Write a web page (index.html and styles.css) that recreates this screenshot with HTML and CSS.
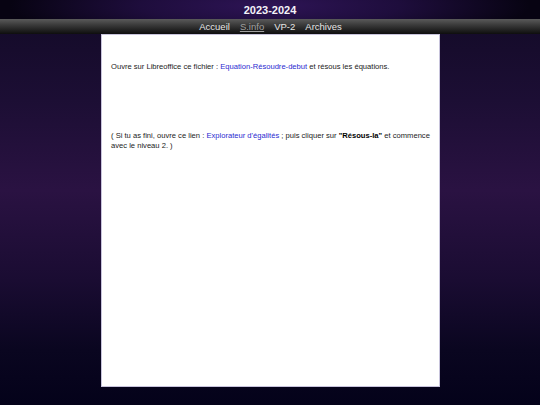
FILE: index.html
```html
<!DOCTYPE html>
<html lang="fr">
<head>
<meta charset="utf-8">
<title>2023-2024</title>
<link rel="stylesheet" href="styles.css">
</head>
<body>
<header class="top">
  <h1 class="title">2023-2024</h1>
</header>
<nav class="menu">
  <a class="menu-item" href="#">Accueil</a>
  <a class="menu-item current" href="#">S.info</a>
  <a class="menu-item" href="#">VP-2</a>
  <a class="menu-item" href="#">Archives</a>
</nav>
<main class="page">
  <section class="content">
    <p class="para first">Ouvre sur Libreoffice ce fichier : <a class="link" href="#">Equation-Résoudre-debut</a> et résous les équations.</p>
    <p class="para second">( Si tu as fini, ouvre ce lien : <a class="link" href="#">Explorateur d'égalités</a> ; puis cliquer sur <strong>"Résous-la"</strong> et commence avec le niveau 2. )</p>
  </section>
</main>
</body>
</html>
```
FILE: styles.css
```css
html, body {
  margin: 0;
  padding: 0;
}
body {
  width: 540px;
  height: 405px;
  overflow: hidden;
  font-family: "Liberation Sans", Arial, sans-serif;
  background: linear-gradient(to bottom, #120a26 0px, #1c0e34 100px, #2a1242 190px, #1a0c32 280px, #0a0620 350px, #04021a 405px);
  display: flex;
  flex-direction: column;
}
.top {
  height: 19px;
  background: radial-gradient(ellipse 260px 40px at 50% 30%, #2e1456 0%, #1e0d3c 50%, #070312 100%);
  display: flex;
  align-items: center;
  justify-content: center;
}
.title {
  margin: 0;
  color: #f4f2f8;
  font-size: 11px;
  font-weight: bold;
  line-height: 19px;
  padding-top: 1px;
}
.menu {
  height: 15px;
  background: linear-gradient(to bottom, #5a5a5a 0%, #3a3a3a 40%, #1c1c1c 80%, #0e0e0e 100%);
  display: flex;
  justify-content: center;
  align-items: center;
  gap: 10px;
  padding-left: 1px;
}
.menu-item {
  color: #e6e6e6;
  text-decoration: none;
  font-size: 9.5px;
  line-height: 15px;
}
.menu-item.current {
  color: #a0a0a0;
  text-decoration: underline;
}
.page {
  display: flex;
  justify-content: center;
}
.content {
  box-sizing: border-box;
  width: 339px;
  height: 353px;
  background: #ffffff;
  border: 1px solid #c8c4dc;
  margin-left: 1px;
  padding: 27px 9px 16px 9px;
}
.para {
  margin: 0;
  font-size: 7.6px;
  line-height: 10px;
  color: #1a1a1a;
}
.para.second {
  margin-top: 59px;
}
.link {
  color: #2a2ad0;
  text-decoration: none;
}
strong {
  color: #000;
}
```
